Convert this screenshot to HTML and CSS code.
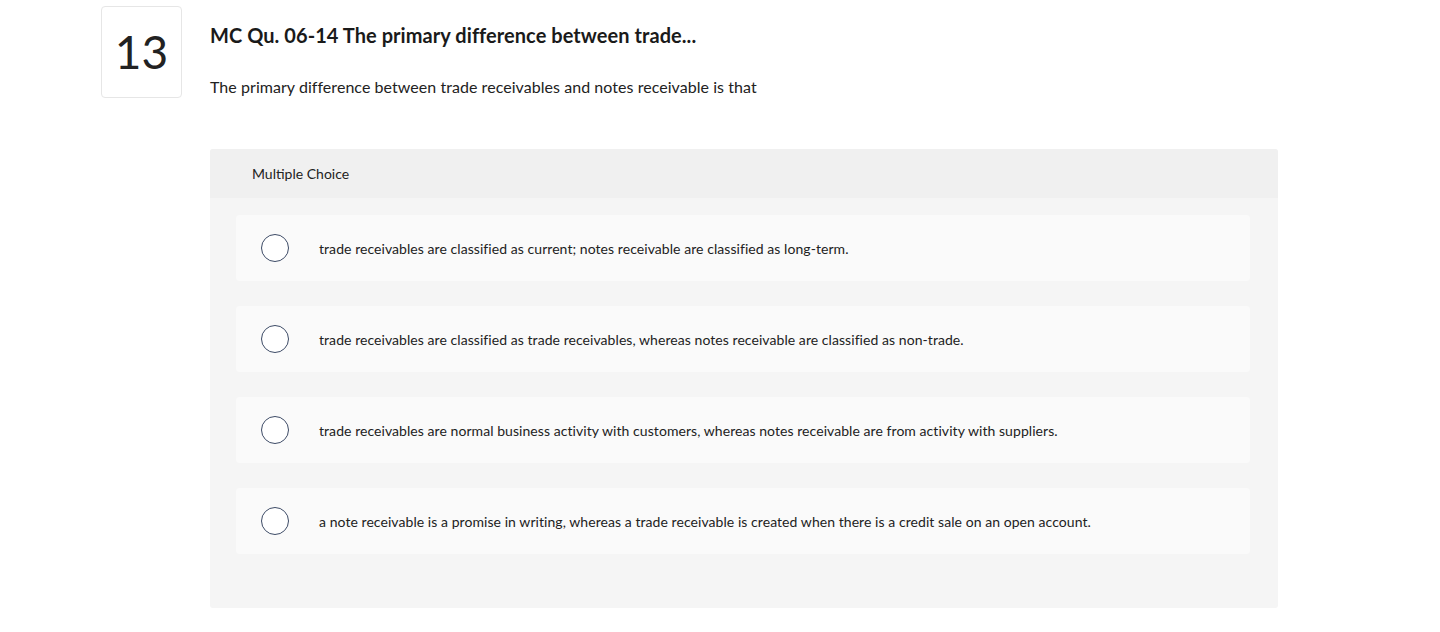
FILE: index.html
```html
<!DOCTYPE html>
<html lang="en">
<head>
    <meta charset="UTF-8">
    <title>MC Qu. 06-14</title>
    <link rel="stylesheet" href="styles.css">
</head>
<body>
<div id="question">
    <div class="number">13</div>
    <div class="content">
        <h2 class="title">MC Qu. 06-14 The primary difference between trade...</h2>
        <p class="prompt">The primary difference between trade receivables and notes receivable is that</p>
        <div class="choices">
            <div class="choices-head">Multiple Choice</div>
            <ul class="choices-list">
                <li>
                    <span class="radio"></span>
                    <span class="label">trade receivables are classified as current; notes receivable are classified as long-term.</span>
                </li>
                <li>
                    <span class="radio"></span>
                    <span class="label">trade receivables are classified as trade receivables, whereas notes receivable are classified as non-trade.</span>
                </li>
                <li>
                    <span class="radio"></span>
                    <span class="label">trade receivables are normal business activity with customers, whereas notes receivable are from activity with suppliers.</span>
                </li>
                <li>
                    <span class="radio"></span>
                    <span class="label">a note receivable is a promise in writing, whereas a trade receivable is created when there is a credit sale on an open account.</span>
                </li>
            </ul>
        </div>
    </div>
</div>
</body>
</html>
```

FILE: styles.css
```css
* {
    margin: 0;
    padding: 0;
    list-style: none;
    box-sizing: border-box;
}

body {
    font-family: Lato, "Open Sans", sans-serif;
    color: #1a1a1a;
    background: #fff;
}

#question {
    display: flex;
    gap: 28px;
    padding: 6px 0 0 101px;
}

.number {
    flex: none;
    width: 81px;
    height: 92px;
    border: 1px solid #e6e6e6;
    border-radius: 4px;
    display: flex;
    align-items: center;
    justify-content: center;
    font-size: 46px;
    font-weight: 400;
    color: #222;
    padding-bottom: 2px;
}

.content {
    width: 1068px;
}

.title {
    margin-top: 16px;
    font-size: 20px;
    line-height: 26px;
    font-weight: 700;
    letter-spacing: 0.06px;
    color: #1a1a1a;
}

.prompt {
    margin-top: 29px;
    font-size: 16px;
    line-height: 20px;
    letter-spacing: 0.05px;
    color: #222;
}

.choices {
    margin-top: 52px;
    background: #f5f5f5;
    border-radius: 3px;
    padding-bottom: 54px;
}

.choices-head {
    height: 49px;
    line-height: 50px;
    padding-left: 42px;
    background: #f0f0f0;
    border-radius: 3px 3px 0 0;
    font-size: 14px;
    color: #222;
}

.choices-list {
    padding: 17px 28px 0 26px;
    display: flex;
    flex-direction: column;
    gap: 25px;
}

.choices-list li {
    height: 66px;
    background: #fafafa;
    border-radius: 4px;
    display: flex;
    align-items: center;
    padding-left: 25px;
}

.radio {
    flex: none;
    width: 28px;
    height: 28px;
    border: 1.5px solid #3d4b66;
    border-radius: 50%;
    background: #fff;
}

.label {
    margin-left: 30px;
    font-size: 14px;
    letter-spacing: 0.06px;
    color: #222;
}
```
